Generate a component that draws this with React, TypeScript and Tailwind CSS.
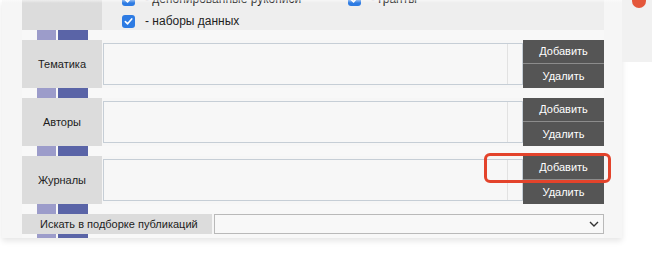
import React from "react";

const font = { fontFamily: '"Liberation Sans", Arial, sans-serif' };

const Bars = ({ h = "h-[10px]" }: { h?: string }) => (
  <div className={`flex ${h} shrink-0 gap-[2px] pl-[15px] bg-[#f8f8f8] overflow-hidden`}>
    <div className="w-[19px] bg-[#9c9cca]" />
    <div className="w-[30px] bg-[#5a64a7]" />
  </div>
);

const Check = ({ label }: { label: string }) => (
  <div className="flex h-[20px] items-center gap-[10px]">
    <span className="flex h-[13px] w-[13px] shrink-0 items-center justify-center rounded-[3px] bg-[#2d7be3]">
      <svg width="9" height="9" viewBox="0 0 10 10" fill="none">
        <path d="M1.5 5.2 L4 7.6 L8.6 2.2" stroke="white" strokeWidth="1.8" strokeLinecap="round" strokeLinejoin="round" />
      </svg>
    </span>
    <span className="whitespace-nowrap text-[12px] text-[#1e1e1e]">{label}</span>
  </div>
);

const FieldRow = ({ title }: { title: string }) => (
  <div className="flex h-[48px] shrink-0">
    <div className="flex w-[80px] shrink-0 items-center justify-center bg-[#dcdcdc] text-[11px] text-[#1c1c1c]">
      {title}
    </div>
    <div className="ml-px flex w-[420px] shrink-0 py-[3px]">
      <div className="flex flex-1 border border-[#c6ced6] bg-[#f7f7f7]">
        <div className="flex-1" />
        <div className="w-[15px] border-l border-[#e2e2e2]" />
      </div>
    </div>
    <div className="flex w-[81px] shrink-0 flex-col text-[11px] text-white">
      <button className="flex h-[24px] items-center justify-center border-b border-[#8c8c8c] bg-[#555555]">Добавить</button>
      <button className="flex h-[24px] items-center justify-center bg-[#555555]">Удалить</button>
    </div>
  </div>
);

export default function App() {
  return (
    <div className="relative flex h-[253px] w-[652px] overflow-hidden bg-white" style={font}>
      <div className="ml-[2px] flex h-[238px] w-[620px] shrink-0 flex-col bg-[#f6f6f6] pl-[20px] pr-[18px] shadow-[0_3px_6px_rgba(0,0,0,0.10)]">
        <div className="flex h-[30px] shrink-0">
          <div className="w-[80px] shrink-0 bg-[#dcdcdc]" />
          <div className="flex-1 overflow-hidden bg-[#eeeeee]">
            <div className="mt-[-11px] grid grid-cols-[226px_1fr] gap-y-[2px] pl-[20px]">
              <Check label="- депонированные рукописи" />
              <Check label="- гранты" />
              <Check label="- наборы данных" />
            </div>
          </div>
        </div>
        <Bars />
        <FieldRow title="Тематика" />
        <Bars />
        <FieldRow title="Авторы" />
        <Bars />
        <FieldRow title="Журналы" />
        <Bars />
        <div className="flex h-[20px] shrink-0">
          <div className="flex w-[190px] shrink-0 items-center bg-[#dcdcdc] pl-[18px] text-[11px] text-[#1c1c1c]">
            Искать в подборке публикаций
          </div>
          <div className="ml-[2px] flex flex-1 items-center justify-end border border-[#b9b9b9] bg-[#f8f8f8] pr-[4px]">
            <svg width="10" height="6" viewBox="0 0 10 6" fill="none">
              <path d="M1 1 L5 5 L9 1" stroke="#333" strokeWidth="1.4" />
            </svg>
          </div>
        </div>
        <Bars h="h-[4px]" />
      </div>
      <div className="relative h-[62px] w-[30px] shrink-0 bg-[#f1f1f1]">
        <div className="absolute left-[10px] top-[-6px] h-[14px] w-[14px] rounded-full bg-[#e4573b]" />
      </div>
      <div className="pointer-events-none absolute left-0 top-0 h-[3px] w-[622px] bg-gradient-to-b from-white/50 to-white/0" />
      <div className="absolute left-[484px] top-[153px] h-[30px] w-[127px] rounded-[6px] border-[3px] border-[#e3432b]" />
    </div>
  );
}
